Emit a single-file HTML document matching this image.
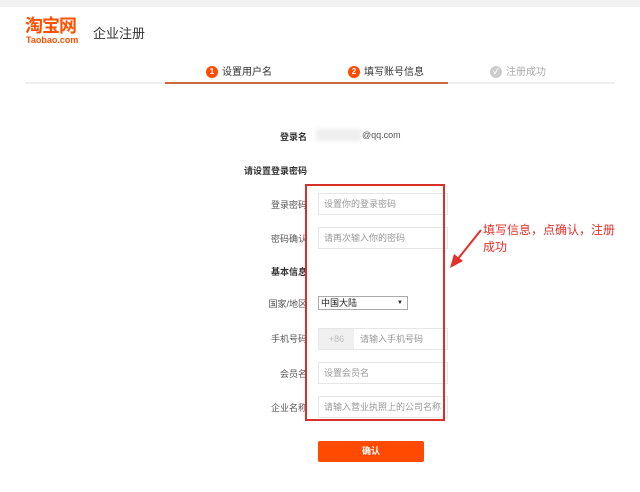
<!DOCTYPE html>
<html><head><meta charset="utf-8"><style>
*{margin:0;padding:0;box-sizing:border-box}
body{width:640px;height:492px;background:#fff;position:relative;overflow:hidden;font-family:"Liberation Sans","Noto Sans CJK SC",sans-serif;color:#333}
.a{position:absolute;white-space:nowrap}
.lbl{position:absolute;font-size:9px;color:#555;text-align:right;right:333px}
.b{font-weight:bold;color:#333}
.in{position:absolute;left:318px;width:130px;height:22px;border:1px solid #e6e6e6;font-size:9px;color:#999;padding-left:5px;line-height:20px}
.c{display:inline-block;width:12px;height:12px;border-radius:50%;color:#fff;font-size:8px;text-align:center;line-height:12px;font-weight:bold;vertical-align:middle;margin-right:4px}
.st{font-size:10px;color:#333;top:63px}
</style></head><body>
<div class="a" style="left:0;top:0;width:640px;height:7px;background:#f2f2f2"></div>
<div class="a" style="left:25px;top:17px;font-size:18px;font-weight:bold;color:#ff5000;letter-spacing:-1px;line-height:19px">淘宝网</div>
<div class="a" style="left:26px;top:35px;font-size:9px;font-weight:bold;color:#ff5000">Taobao.com</div>
<div class="a" style="left:93px;top:23px;font-size:13px;color:#333">企业注册</div>
<div class="a" style="left:25px;top:82px;width:590px;height:2px;background:#eee"></div>
<div class="a" style="left:165px;top:82px;width:283px;height:2px;background:#c96a3c"></div>
<div class="a st" style="left:206px"><span class="c" style="background:#ff4a00">1</span>设置用户名</div>
<div class="a st" style="left:348px"><span class="c" style="background:#ff4a00">2</span>填写账号信息</div>
<div class="a st" style="left:490px;color:#aaa"><span class="c" style="background:#ccc">✓</span>注册成功</div>

<div class="lbl b" style="top:130px">登录名</div>
<div class="a" style="left:316px;top:129px;width:46px;height:12px;background:#eee;filter:blur(2px)"></div>
<div class="a" style="left:362px;top:130px;font-size:9px;color:#555">@qq.com</div>
<div class="a b" style="left:244px;top:164px;font-size:9px">请设置登录密码</div>
<div class="lbl" style="top:198px">登录密码</div>
<div class="in" style="top:193px">设置你的登录密码</div>
<div class="lbl" style="top:232px">密码确认</div>
<div class="in" style="top:227px">请再次输入你的密码</div>
<div class="lbl b" style="top:265px">基本信息</div>
<div class="lbl" style="top:297px">国家/地区</div>
<div class="a" style="left:318px;top:296px;width:90px;height:14px;border:1px solid #aaa;font-size:9px;color:#222;padding-left:2px;line-height:12px">中国大陆<span style="position:absolute;right:4px;font-size:6px">▼</span></div>
<div class="lbl" style="top:332px">手机号码</div>
<div class="in" style="top:328px;padding-left:0;color:#999"><span style="display:inline-block;width:35px;height:20px;background:#f0f0f0;text-align:center;color:#bbb">+86</span><span style="margin-left:6px">请输入手机号码</span></div>
<div class="lbl" style="top:367px">会员名</div>
<div class="in" style="top:362px">设置会员名</div>
<div class="lbl" style="top:401px">企业名称</div>
<div class="in" style="top:396px">请输入营业执照上的公司名称</div>
<div class="a" style="left:305px;top:184px;width:140px;height:237px;border:2px solid #d9302a"></div>
<div class="a" style="left:318px;top:441px;width:106px;height:21px;background:#ff4a00;border-radius:2px;color:#fff;font-size:9px;font-weight:bold;text-align:center;line-height:21px">确认</div>
<svg class="a" style="left:445px;top:220px" width="45" height="55"><line x1="36" y1="10" x2="12" y2="40" stroke="#e3302a" stroke-width="2"/><polygon points="5,48 9,34 18,41" fill="#e3302a"/></svg>
<div class="a" style="left:483px;top:222px;font-size:12px;color:#e3302a;line-height:17px">填写信息，点确认，注册<br>成功</div>
</body></html>
